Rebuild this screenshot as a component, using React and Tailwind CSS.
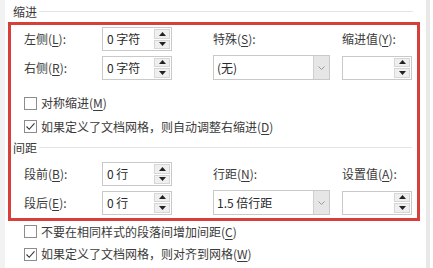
import React from "react";

const U = ({ children }) => (
  <span className="underline decoration-1 underline-offset-[2px]">{children}</span>
);

const Up = () => (
  <svg width="7" height="4" viewBox="0 0 7 4"><path d="M0 4 L3.5 0 L7 4 Z" fill="#222" /></svg>
);
const Down = () => (
  <svg width="7" height="4" viewBox="0 0 7 4"><path d="M0 0 L3.5 4 L7 0 Z" fill="#222" /></svg>
);

const Spinner = ({ value }) => (
  <div className="flex h-[24px] w-[70px] border border-[#c9c9c9] bg-white">
    <div className="flex-1 pl-[4px] text-[12px] leading-[21px] text-[#2a2a2a]">{value}</div>
    <div className="flex w-[17px] flex-col gap-px py-px pr-px">
      <div className="flex flex-1 items-center justify-center border border-[#d6d6d6] bg-[#efefef]"><Up /></div>
      <div className="flex flex-1 items-center justify-center border border-[#d6d6d6] bg-[#efefef]"><Down /></div>
    </div>
  </div>
);

const Select = ({ value }) => (
  <div className="flex h-[25px] w-[117px] border border-[#c9c9c9] bg-white">
    <div className="flex-1 pl-[3px] text-[12px] leading-[23px] text-[#2a2a2a]">{value}</div>
    <div className="flex w-[16px] items-center justify-center border-l border-[#cfcfcf] bg-[#e6e6e6]">
      <svg width="7" height="4" viewBox="0 0 7 4"><path d="M0.5 0.5 L3.5 3.5 L6.5 0.5" fill="none" stroke="#9a9a9a" strokeWidth="1" /></svg>
    </div>
  </div>
);

const Check = ({ checked }) => (
  <div className="flex h-[13px] w-[13px] shrink-0 items-center justify-center border border-[#8c8c8c] bg-white">
    {checked && (
      <svg width="11" height="11" viewBox="0 0 11 11"><path d="M1.5 5.5 L4.2 8.3 L9.5 2.3" fill="none" stroke="#333" strokeWidth="1.1" /></svg>
    )}
  </div>
);

const CheckRow = ({ checked, children, cls }) => (
  <div className={"flex items-center " + cls}>
    <Check checked={checked} />
    <span className="ml-[4px] text-[12px] text-[#3a3a3a]">{children}</span>
  </div>
);

const Label = ({ children, w }) => (
  <div className={"text-[12px] text-[#3a3a3a] " + w}>{children}</div>
);

export default function App() {
  return (
    <div
      className="flex h-[268px] w-[433px] overflow-hidden bg-white"
      style={{ fontFamily: '"Noto Sans CJK SC", "Noto Sans", sans-serif' }}
    >
      <div className="w-[5px] shrink-0 bg-[#f2f2f2]" />
      <div className="flex w-[421px] shrink-0 flex-col">
        <div className="flex h-[22px] items-center pl-[8px] pt-[1px]">
          <span className="text-[12px] text-[#3a3a3a]">缩进</span>
          <div className="ml-[2px] mr-[13px] h-px flex-1 bg-[#e4e4e4]" />
        </div>
        <div className="ml-[3px] box-border flex h-[199px] w-[412px] flex-col border-[3px] border-[#d6403b]">
          <div className="mt-[2px] flex h-[24px] items-center pl-[13px]">
            <Label w="w-[78px]">左侧(<U>L</U>):</Label>
            <Spinner value="0 字符" />
            <Label w="ml-[41px] w-[117px]">特殊(<U>S</U>):</Label>
            <Label w="ml-[12px]">缩进值(<U>Y</U>):</Label>
          </div>
          <div className="mt-[4px] flex h-[25px] items-center pl-[13px]">
            <Label w="w-[78px]">右侧(<U>R</U>):</Label>
            <Spinner value="0 字符" />
            <div className="ml-[41px]"><Select value="(无)" /></div>
            <div className="ml-[12px]"><Spinner value="" /></div>
          </div>
          <CheckRow cls="mt-[11px] h-[24px] pl-[13px]">对称缩进(<U>M</U>)</CheckRow>
          <CheckRow checked cls="h-[23px] pl-[13px]">如果定义了文档网格，则自动调整右缩进(<U>D</U>)</CheckRow>
          <div className="flex h-[19px] items-center pl-[2px]">
            <span className="text-[12px] text-[#3a3a3a]">间距</span>
            <div className="ml-[2px] mr-[5px] h-px flex-1 bg-[#e4e4e4]" />
          </div>
          <div className="mt-[5px] flex h-[24px] items-center pl-[13px]">
            <Label w="w-[78px]">段前(<U>B</U>):</Label>
            <Spinner value="0 行" />
            <Label w="ml-[41px] w-[117px]">行距(<U>N</U>):</Label>
            <Label w="ml-[12px]">设置值(<U>A</U>):</Label>
          </div>
          <div className="mt-[4px] flex h-[25px] items-center pl-[13px]">
            <Label w="w-[78px]">段后(<U>E</U>):</Label>
            <Spinner value="0 行" />
            <div className="ml-[41px]"><Select value="1.5 倍行距" /></div>
            <div className="ml-[12px]"><Spinner value="" /></div>
          </div>
        </div>
        <CheckRow cls="h-[21px] pl-[19px]">不要在相同样式的段落间增加间距(<U>C</U>)</CheckRow>
        <CheckRow checked cls="h-[24px] pl-[19px]">如果定义了文档网格，则对齐到网格(<U>W</U>)</CheckRow>
      </div>
      <div className="w-[4px] shrink-0 bg-[#e8e8e8]" />
    </div>
  );
}
